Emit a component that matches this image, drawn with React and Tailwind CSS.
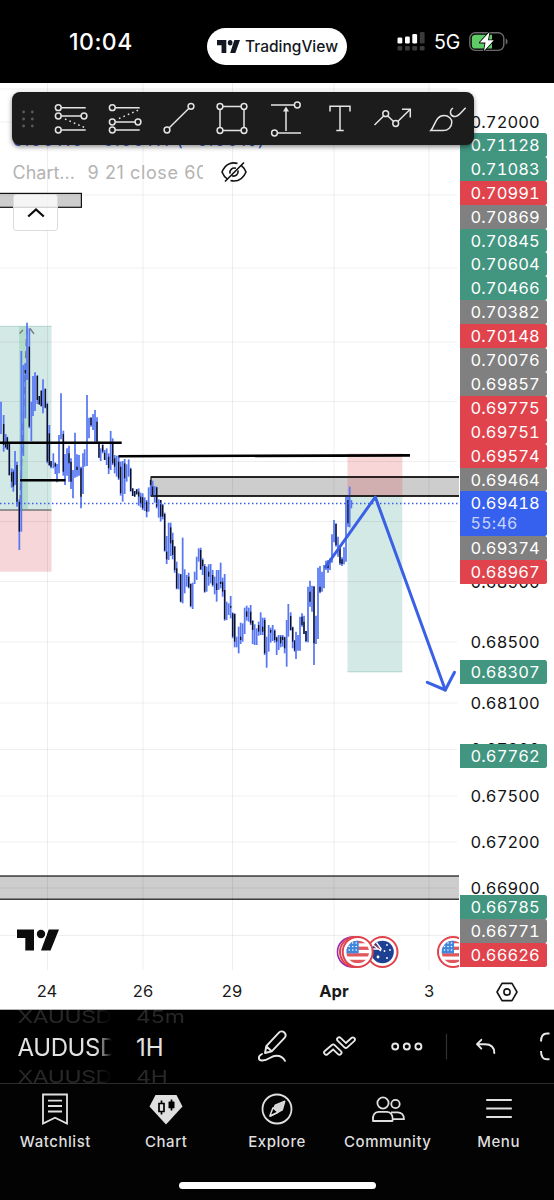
import React from "react";

// Each bar: x, high, low, and for falling bars the body top and bottom (units: 1/3 px, origin at y 310).
const BARS_A = [
  [3, 275, 372], [11, 315, 425, 342, 405], [17, 372, 415, 398, 412], [22, 380, 420, 382, 418],
  [28, 398, 497, 400, 495], [35, 475, 533, 487, 515], [40, 478, 545, 485, 530], [45, 423, 525],
  [51, 455, 590, 465, 575], [58, 568, 720, 575, 665], [64, 123, 665], [70, 165, 438],
  [76, 160, 325, 180, 190], [81, 38, 210], [88, 55, 355, 110, 350], [94, 275, 393],
  [99, 198, 318], [105, 187, 303], [112, 195, 282, 198, 270], [118, 258, 285, 258, 283],
  [124, 240, 290, 243, 288], [129, 208, 310], [136, 235, 295, 237, 293], [142, 278, 460, 282, 455],
  [148, 345, 468, 370, 465], [153, 453, 475, 453, 470], [160, 430, 475], [166, 457, 492, 460, 470],
  [171, 462, 517], [177, 375, 490], [183, 250, 388], [190, 362, 497, 372, 485], [195, 432, 525],
  [201, 415, 497], [207, 407, 515, 430, 460], [213, 445, 537, 455, 515], [219, 480, 565],
  [225, 368, 503], [231, 433, 500, 470, 480], [237, 435, 497], [243, 470, 595, 475, 560],
  [249, 430, 552], [254, 418, 470], [261, 255, 468], [267, 323, 385], [273, 322, 350, 323, 346],
  [279, 312, 360], [285, 300, 395], [291, 322, 395, 335, 395], [297, 395, 443, 396, 443],
  [302, 415, 453], [308, 403, 430, 405, 425], [314, 420, 450, 428, 450], [320, 415, 465],
  [326, 430, 492, 440, 475], [332, 363, 480], [338, 385, 465, 400, 460], [344, 435, 490, 445, 470],
  [350, 437, 500], [356, 437, 510, 455, 505], [362, 455, 557, 470, 550], [368, 453, 575],
  [374, 447, 552, 460, 505], [380, 463, 515], [386, 448, 500], [392, 473, 545, 477, 543],
  [398, 535, 558, 535, 558], [404, 543, 560, 543, 560], [410, 537, 553, 538, 553],
  [416, 535, 587, 545, 560], [422, 548, 592, 560, 580], [428, 550, 600, 562, 595], [434, 562, 603],
  [440, 570, 622, 575, 605], [446, 532, 605],
];
// Same units, origin at (130, 440).
const BARS_B = [
  [62, 120, 168, 120, 135], [68, 122, 168, 140, 165], [74, 138, 188], [80, 140, 205, 142, 200],
  [86, 178, 233], [92, 180, 245, 180, 230], [98, 192, 238, 195, 230], [104, 218, 335, 222, 332],
  [110, 288, 372, 335, 358], [116, 248, 360], [122, 248, 348, 262, 310], [128, 278, 358, 300, 345],
  [134, 318, 398, 320, 390], [140, 365, 448, 385, 445], [146, 400, 448], [152, 402, 487, 403, 485],
  [158, 293, 490], [164, 388, 460], [170, 405, 440], [176, 398, 445, 410, 442],
  [182, 430, 502, 432, 498], [188, 428, 507], [194, 395, 432], [200, 350, 420], [206, 325, 365],
  [212, 323, 390, 330, 388], [218, 355, 405, 360, 378], [224, 372, 458, 378, 455], [230, 380, 455],
  [236, 373, 437, 395, 410], [242, 372, 430], [248, 390, 440, 405, 435], [254, 410, 463],
  [260, 390, 485, 430, 450], [266, 390, 450], [272, 368, 445, 425, 432], [278, 413, 470, 425, 455],
  [284, 402, 542, 450, 538], [290, 485, 540], [296, 490, 525], [302, 468, 535, 498, 503],
  [308, 517, 595, 520, 590], [314, 520, 622, 522, 605], [320, 590, 622], [326, 560, 640],
  [332, 548, 612, 590, 600], [338, 550, 605], [344, 503, 582], [350, 497, 542, 514, 530],
  [356, 503, 545], [362, 495, 555, 515, 550], [368, 540, 612, 543, 570], [374, 553, 615],
  [380, 565, 615], [386, 545, 587, 555, 575], [392, 517, 585], [398, 533, 585, 560, 575],
  [404, 533, 645, 540, 640], [410, 590, 683], [416, 555, 635], [422, 563, 608, 570, 578],
  [428, 555, 603], [434, 568, 608, 572, 600], [440, 590, 645, 592, 605], [446, 585, 630],
  [452, 585, 622, 590, 610], [458, 585, 620, 590, 600], [464, 590, 640, 592, 625], [470, 540, 680],
  [475, 492, 590], [482, 517, 572, 528, 570], [488, 560, 625, 562, 605], [494, 600, 635, 602, 632],
  [498, 575, 657], [504, 585, 632], [510, 530, 632], [516, 520, 560, 530, 555],
  [522, 527, 582, 545, 582], [528, 573, 607, 573, 603], [534, 440, 607], [540, 422, 500, 455, 485],
  [546, 437, 515], [552, 438, 675, 440, 610], [558, 527, 612], [564, 383, 597],
  [570, 378, 460, 440, 455], [576, 395, 455], [582, 375, 445], [588, 362, 390], [594, 360, 398, 365, 385],
  [600, 355, 390], [606, 283, 368], [612, 240, 307], [618, 250, 320, 252, 315], [624, 290, 350],
  [630, 320, 375, 325, 370], [636, 352, 378, 358, 372], [642, 322, 373], [648, 170, 365],
  [654, 165, 260, 180, 250], [659, 140, 262], [664, 180, 205],
];

const toBar = (dx, dy) => ([x, h, l, t, b]) => ({
  x: dx + x / 3, h: dy + h / 3, l: dy + l / 3,
  t: t === undefined ? null : dy + t / 3, b: b === undefined ? null : dy + b / 3,
});
const BARS = [...BARS_A.map(toBar(0, 310)), ...BARS_B.map(toBar(130, 440))];

const V_GRID = [47.5, 143, 232.5, 334, 429];
const H_GRID = [89, 122, 195, 268, 342, 401.5, 461.5, 521.5, 581.5, 642, 703, 749.5, 796, 842, 888, 935.5];

function UsFlag({ cx, ring = "#e0434b" }) {
  return (
    <g>
      <circle cx={cx} cy="952" r="15" fill="#fff" stroke={ring} strokeWidth="2" />
      <g clipPath={`url(#flag${cx})`}>
        <rect x={cx - 12} y="940" width="24" height="24" fill="#fff" />
        {[940, 946.6, 953.2, 959.8].map((y) => (
          <rect key={y} x={cx - 12} y={y} width="24" height="3.3" fill="#e0575d" />
        ))}
        <rect x={cx - 12} y="940" width="13" height="13.3" fill="#3f86dd" />
        {[943, 946.5, 950].map((y) =>
          [-8.5, -5, -1.5].map((d) => <circle key={`${y}${d}`} cx={cx + d} cy={y} r="0.8" fill="#fff" />)
        )}
      </g>
      <clipPath id={`flag${cx}`}>
        <circle cx={cx} cy="952" r="11.3" />
      </clipPath>
    </g>
  );
}

function AuFlag() {
  return (
    <g>
      <circle cx="382.5" cy="952" r="15" fill="#fff" stroke="#e0434b" strokeWidth="2" />
      <circle cx="382.5" cy="952" r="11.3" fill="#1d4093" />
      <path d="M373 945 l8 6 M376.5 942.5 l5 7 M373 949 h8" stroke="#fff" strokeWidth="1.3" />
      <path d="M374 944 l6 5" stroke="#e0434b" strokeWidth="1" />
      <g fill="#fff">
        <circle cx="387" cy="945" r="0.9" />
        <circle cx="390" cy="950" r="0.9" />
        <circle cx="384.5" cy="951" r="0.9" />
        <circle cx="387" cy="958" r="1" />
        <circle cx="378" cy="957" r="1.4" />
      </g>
    </g>
  );
}

function Chart() {
  return (
    <svg className="block h-[887px] w-[459px]" viewBox="0 83 459 887">
      <g fill="#d3e9e5">
        <rect x="0" y="326" width="51.5" height="184" />
        <rect x="347.5" y="496" width="54.8" height="176" />
      </g>
      <rect x="0" y="510" width="51.5" height="61.7" fill="#f6d6d8" />
      <rect x="19" y="326" width="9" height="184" fill="#b3dccf" />
      <g fill="#cdcdcd" stroke="#111" strokeWidth="1.2">
        <rect x="-2" y="193.4" width="83.4" height="13.9" />
        <rect x="151" y="477" width="312" height="19" />
        <rect x="-2" y="876" width="465" height="23.2" />
      </g>
      <rect x="347.5" y="453.5" width="54.8" height="42.5" fill="#e0434b" fillOpacity="0.22" />
      <g stroke="#000" strokeOpacity="0.065" strokeWidth="1">
        {V_GRID.map((x) => <line key={x} x1={x} x2={x} y1="83" y2="970" />)}
        {H_GRID.map((y) => <line key={y} x1="0" x2="457" y1={y} y2={y} />)}
      </g>
      <path d="M0 326.3 H51.5 M347.5 671.8 H402.3" stroke="#a9cdc5" strokeWidth="0.8" />
      <path d="M0 510 H51.5" stroke="#777" strokeWidth="1.3" />
      <path d="M20 502 L27 324" stroke="#777" strokeWidth="1.4" strokeDasharray="7 5" fill="none" />
      <path d="M19.5 333.5 L23 330 M30 328.5 L34 333.8" stroke="#777" strokeWidth="1.4" fill="none" />
      <g>
        {BARS.map((c, i) => (
          <g key={i}>
            <line x1={c.x} x2={c.x} y1={c.h} y2={c.l} stroke="#5878f2" strokeWidth="1.75" />
            {c.t !== null && <line x1={c.x} x2={c.x} y1={c.t} y2={c.b} stroke="#10131f" strokeWidth="1.4" />}
          </g>
        ))}
      </g>
      <path d="M0 442.7 H121.7 M20 480.2 H65.5 M118.5 456.2 L410 455.4" stroke="#000" strokeWidth="2.6" />
      <path d="M151 477 H459 M151 496 H459" stroke="#111" strokeWidth="1.4" />
      <path d="M0 503.4 H459" stroke="#3b5fe8" strokeWidth="1.5" strokeDasharray="1.5 2.5" />
      <g fill="none" stroke="#3a60e6" strokeWidth="3" strokeLinecap="round" strokeLinejoin="round">
        <path d="M325.5 567 L375.3 497 L445.3 690" />
        <path d="M427.3 682.3 L445.3 690 L454.5 672.3" />
      </g>
      <circle cx="352.5" cy="952" r="15" fill="#fff" stroke="#9b27b0" strokeWidth="1.6" />
      <circle cx="355" cy="952" r="15" fill="#fff" stroke="#e0434b" strokeWidth="2" />
      <AuFlag />
      <UsFlag cx={357.7} />
      <UsFlag cx={453} />
      <g fill="#0c0c0c" stroke="#fff" strokeWidth="3" paintOrder="stroke">
        <path d="M17 929.5 H34 V950.5 H25.3 V938 H17 Z" />
        <path d="M48.7 929.5 H59 L50.5 950.5 H41 Z" />
        <circle cx="41" cy="934" r="4.2" />
      </g>
    </svg>
  );
}

const GREEN = "bg-[#42957f]";
const RED = "bg-[#e0434b]";
const GRAY = "bg-[#808080]";

function Tag({ color, children, sub }) {
  return (
    <div className={`relative z-10 flex w-[87.5px] shrink-0 flex-col rounded-r-[2.5px] pl-[11px] text-white ${color} ${sub ? "h-[44.6px]" : "h-[23.92px]"}`}>
      <span className="leading-[24px]">{children}</span>
      {sub && <span className="text-[16px] leading-[17px] tracking-[0.3px] text-[#c8d3fb]">{sub}</span>}
    </div>
  );
}

function Price({ className, children }) {
  return <div className={`h-6 shrink-0 pl-[11px] leading-6 text-[#131313] ${className}`}>{children}</div>;
}

const TOP_TAGS = [
  ["0.71128", GREEN], ["0.71083", GREEN], ["0.70991", RED], ["0.70869", GRAY], ["0.70845", GREEN],
  ["0.70604", GREEN], ["0.70466", GREEN], ["0.70382", GRAY], ["0.70148", RED], ["0.70076", GRAY],
  ["0.69857", GRAY], ["0.69775", RED], ["0.69751", RED], ["0.69574", RED], ["0.69464", GRAY],
];

function PriceScale() {
  return (
    <div className="flex h-[887px] w-[95px] flex-col overflow-hidden pt-[26.9px] pl-[0.5px] text-[16.5px] tracking-[0.1px] tabular-nums">
      <Price className="-mb-[1px]">0.72000</Price>
      {TOP_TAGS.map(([v, c]) => <Tag key={v} color={c}>{v}</Tag>)}
      <Tag color="bg-[#3660ee]" sub="55:46">0.69418</Tag>
      <Tag color={GRAY}>0.69374</Tag>
      <Tag color={RED}>0.68967</Tag>
      <Price className="-mt-[13.8px]">0.68900</Price>
      <Price className="mt-[36.3px]">0.68500</Price>
      <div className="mt-[5.5px] flex flex-col"><Tag color={GREEN}>0.68307</Tag></div>
      <Price className="mt-[7.3px]">0.68100</Price>
      <Price className="mt-[22px]">0.67800</Price>
      <div className="-mt-[17.5px] flex flex-col"><Tag color={GREEN}>0.67762</Tag></div>
      <Price className="mt-[16.5px]">0.67500</Price>
      <Price className="mt-[22px]">0.67200</Price>
      <Price className="mt-[22px]">0.66900</Price>
      <div className="-mt-[5px] flex flex-col">
        <Tag color={GREEN}>0.66785</Tag>
        <Tag color={GRAY}>0.66771</Tag>
        <Tag color={RED}>0.66626</Tag>
      </div>
    </div>
  );
}

const Dot = ({ x, y }) => <circle cx={x} cy={y} r="2.9" fill="#1c1c1c" />;

function ToolIcon({ children }) {
  return (
    <span className="flex w-[53.7px] shrink-0 justify-center">
      <svg className="h-[40px] w-[40px]" viewBox="-20 -20 40 40" fill="none" stroke="#e4e4e4" strokeWidth="1.5">
        {children}
      </svg>
    </span>
  );
}

function DrawingBar() {
  return (
    <div className="absolute top-[9px] left-[11.5px] z-20 flex h-[53px] w-[462px] items-center overflow-hidden rounded-[8px] bg-[#1c1c1c] shadow-[0_2px_5px_rgba(0,0,0,0.45)]">
      <span className="flex w-[32.8px] shrink-0 justify-center">
        <svg className="h-6 w-6" viewBox="0 0 24 24" fill="#5a5a5a">
          {[5, 12, 19].map((y) => [7.6, 16.3].map((x) => <circle key={`${x}${y}`} cx={x} cy={y} r="1.4" />))}
        </svg>
      </span>
      <ToolIcon>
        <path d="M-12.7 -11.3 H14.7 M-12.7 -3 H13 M-12.7 11 H14.7" />
        <path d="M-6 0 L13.5 8.5" strokeDasharray="1.6 3.2" />
        <Dot x={-12.7} y={-11.3} /><Dot x={-12.7} y={-3} /><Dot x={13} y={-3} /><Dot x={-12.7} y={11} />
      </ToolIcon>
      <ToolIcon>
        <path d="M-12.7 -11.3 H14.7 M-12.7 3 H13 M-12.7 11 H14.7" />
        <path d="M-6 -0.5 L13.5 -9" strokeDasharray="1.6 3.2" />
        <Dot x={-12.7} y={-11.3} /><Dot x={-12.7} y={3} /><Dot x={13} y={3} /><Dot x={-12.7} y={11} />
      </ToolIcon>
      <ToolIcon>
        <path d="M-12 11 L12 -12.7" />
        <Dot x={-12} y={11} /><Dot x={12} y={-12.7} />
      </ToolIcon>
      <ToolIcon>
        <rect x="-12" y="-12.5" width="24" height="24" />
        <Dot x={-12} y={-12.5} /><Dot x={12} y={-12.5} /><Dot x={-12} y={11.5} /><Dot x={12} y={11.5} />
      </ToolIcon>
      <ToolIcon>
        <path d="M-15 -14 H11 M-11 14 H15 M0 -9 V12" />
        <path d="M0 -12.5 L3 -7.5 H-3 Z" fill="#e4e4e4" stroke="none" />
        <Dot x={11.3} y={-14} /><Dot x={-11.5} y={14} />
      </ToolIcon>
      <ToolIcon>
        <path d="M-10 -7.5 V-12.7 H10 V-7.5 M0 -12.7 V11.5 M-3.7 11.5 H3.7" />
      </ToolIcon>
      <ToolIcon>
        <path d="M-18.5 6 L-7.3 -5 L2.7 4.5 L17 -9.5 M9 -9.8 H17.3 V-1.5" />
        <Dot x={-7.3} y={-5.3} /><Dot x={2.7} y={4.5} />
      </ToolIcon>
      <ToolIcon>
        <path d="M-16.2 11.6 C-12 7 -11.5 -3.4 -3 -3.4 C2 -3.4 4.8 0 4.8 3.3 C4.8 8 1 11.6 -4 11.6 Z" />
        <path d="M6 -11 C1.8 -8 3 -2.3 8.5 -2.5 C12 -3 14 -6.5 18.7 -11.3" />
      </ToolIcon>
    </div>
  );
}

function Legend() {
  return (
    <div className="absolute top-[45px] left-[12.5px] flex flex-col">
      <span className="h-[24px] text-[18px] leading-[24px] tracking-[1px] whitespace-nowrap text-[#3b56d8]">0.00110 +0.00111 (+0.00%)</span>
      <div className="mt-[7px] flex h-[26px] items-center text-[18px] text-[#b3b3b3]">
        <span className="w-[75px]">Chart...</span>
        <span className="w-[115px] overflow-hidden tracking-[0.6px] whitespace-nowrap">9 21 close 60</span>
        <svg className="ml-[17px] h-[26px] w-[28px]" viewBox="-14 -13 28 26" fill="none" stroke="#111" strokeWidth="1.6">
          <path d="M3.5 -8.4 C1 -9.3 -2 -9.3 -4.5 -8.3 C-8 -7 -10.5 -3.5 -12 0 C-10.8 3 -9 5.5 -6.5 7.2 M7 -6.8 C9.2 -5 10.8 -2.6 12 0 C9.6 5.8 5 9 0 9 C-1.2 9 -2.4 8.8 -3.5 8.5" />
          <path d="M2 -3.7 C-1.5 -5 -4.8 -2 -4 1.6 M4 -1.6 C4.8 2 1.5 5 -2 3.8 M-9 9.5 L10 -9.5" />
        </svg>
      </div>
    </div>
  );
}

function SettingsIcon() {
  return (
    <svg className="h-6 w-6" viewBox="-12 -12 24 24" fill="none" stroke="#151515" strokeWidth="1.6">
      <path d="M-5 -8.6 H5 L10 0 L5 8.6 H-5 L-10 0 Z" strokeLinejoin="round" />
      <circle r="3.1" />
    </svg>
  );
}

function StatusBar() {
  return (
    <header className="flex h-[83px] bg-black text-white">
      <div className="flex w-[207px] items-start pt-[28px] pl-[69px] text-[23px] leading-[28px] font-medium tracking-[0.5px]">10:04</div>
      <div className="mt-[28px] flex h-[37px] w-[140px] items-center rounded-full bg-white pl-[10px] text-[#131722]">
        <svg className="h-[13px] w-[23px]" viewBox="0 0 42 21" preserveAspectRatio="none" fill="#131722">
          <path d="M0 0 H17 V21 H8.3 V8.5 H0 Z M31.7 0 H42 L33.5 21 H24 Z" />
          <circle cx="24" cy="4.4" r="4.3" />
        </svg>
        <span className="ml-[5px] text-[15.5px] font-medium">TradingView</span>
      </div>
      <div className="flex items-start pt-[31px] pl-[50px]">
        <svg className="mt-[1px] h-[20px] w-[28px]" viewBox="0 0 28 20">
          <g fill="#fff">
            <rect x="0.5" y="5.5" width="4.8" height="6" rx="1.3" />
            <rect x="8" y="4.5" width="4.8" height="7" rx="1.3" />
            <rect x="15.3" y="2" width="4.8" height="9.5" rx="1.3" />
          </g>
          <g fill="#3a3a3a">
            <rect x="22.8" y="0" width="4.8" height="11.5" rx="1.3" />
            {[0.5, 8, 15.3, 22.8].map((x) => <rect key={x} x={x} y="14" width="4.8" height="4.6" rx="1.3" />)}
          </g>
        </svg>
        <span className="ml-[9px] w-[26px] text-[19.5px] leading-[23px]">5G</span>
        <svg className="ml-[9px] h-[22px] w-[40px]" viewBox="0 0 40 22">
          <rect x="0.8" y="1.8" width="34" height="17.6" rx="5.5" fill="none" stroke="#6a6a6a" strokeWidth="1.4" />
          <path d="M6.5 3.7 H23 V17.6 H6.5 A3.7 3.7 0 0 1 2.8 13.9 V7.4 A3.7 3.7 0 0 1 6.5 3.7 Z" fill="#5fcb65" />
          <path d="M36.7 7.6 C39.2 8.7 39.2 12.4 36.7 13.5 Z" fill="#6a6a6a" />
          <path d="M20.5 1 L10.8 11.6 H16.5 L15 20 L24.8 9.3 H19 Z" fill="#fff" stroke="#000" strokeWidth="1.6" paintOrder="stroke" strokeLinejoin="round" />
        </svg>
      </div>
    </header>
  );
}

function Wheel({ above, value, below, className }) {
  return (
    <div className={`flex h-[73px] flex-col items-start overflow-hidden whitespace-nowrap ${className}`}>
      <span className="h-[18px] shrink-0 origin-left scale-y-[0.78] text-[23px] leading-[13px] text-[#282828]">{above}</span>
      <span className="h-[39px] shrink-0 text-[24px] leading-[39px] text-[#e2e2e2]">{value}</span>
      <span className="h-[20px] shrink-0 origin-left scale-y-[0.78] text-[23px] leading-[20px] text-[#282828]">{below}</span>
    </div>
  );
}

function ToolRow() {
  return (
    <div className="flex h-[73px] overflow-hidden bg-black">
      <Wheel
        className="ml-[17.5px] w-[94.5px] tracking-[-0.4px] [mask-image:linear-gradient(to_right,black_83%,transparent)]"
        above="XAUUSD" value="AUDUSD" below="XAUUSD"
      />
      <Wheel className="ml-[24px] w-[80px]" above="45m" value="1H" below="4H" />
      <svg className="h-[73px] w-[338px] shrink-0" viewBox="216 1010 338 73" fill="none" stroke="#e8e8e8" strokeWidth="1.9" strokeLinejoin="round" strokeLinecap="round">
        <path d="M265 1053 L266.3 1046.2 L278.7 1032.8 C280.3 1031 282.7 1031 284.3 1032.5 C286 1034.2 286 1036.4 284.3 1038.2 L271.7 1051.3 Z M266.3 1046.2 L271.7 1051.3" />
        <path d="M262 1054 C257.5 1056 258 1060.8 262.5 1060.5 C269 1060.3 270.5 1055.7 276.5 1055.7 C281 1055.7 283.5 1057.8 285 1060.8" />
        <path d="M326.2 1052.6 L333.2 1046.6 L339.4 1052.6 M339.2 1039.4 L345.9 1045.8 L352.8 1039.6" strokeWidth="6" />
        <path d="M326.2 1052.6 L333.2 1046.6 L339.4 1052.6 M339.2 1039.4 L345.9 1045.8 L352.8 1039.6" stroke="#000" strokeWidth="2.4" />
        <circle cx="395.2" cy="1046.5" r="3" />
        <circle cx="406.8" cy="1046.5" r="3" />
        <circle cx="418.4" cy="1046.5" r="3" />
        <path d="M446.5 1034 V1059" stroke="#303030" strokeWidth="1.2" />
        <path d="M481.3 1039.8 L477 1044.2 L481.3 1048.6 M477.3 1044.2 H485 C491 1044.2 494.3 1047 494.3 1053" />
        <path d="M549.5 1033.5 H547 C543 1033.5 541 1035.5 541 1041.5 M541 1051 C541 1057 543 1059.3 547 1059.3 H549.5" strokeLinecap="butt" />
      </svg>
    </div>
  );
}

const TABS = [
  ["Watchlist", (
    <path key="w" d="M-12 -14.5 H12 V14.5 L0 8.7 L-12 14.5 Z M-7 -8.3 H7 M-7 -3 H7 M-7 2.5 H7" />
  )],
  ["Chart", (
    <g key="c">
      <path d="M-10.5 -14 H10.5 L16.5 -2.5 L0 15.5 L-16.5 -2.5 Z" fill="#e0e0e0" stroke="none" />
      <path d="M-7 -5.5 H-2 V2.5 H-7 Z M-4.5 -8.5 V-5.5 M-4.5 2.5 V5.5 M5.5 -9.5 V1.5" stroke="#000" strokeWidth="1.7" />
      <rect x="2.5" y="-7.5" width="6" height="6.8" rx="0.6" fill="#000" stroke="none" />
    </g>
  )],
  ["Explore", (
    <g key="e">
      <circle r="14.5" />
      <path d="M7.8 -7.8 L5.3 1 L-6.3 7.2 L-1.8 -4 Z" fill="#d5d5d5" strokeWidth="1.3" strokeLinejoin="round" />
      <path d="M-7.2 7 L-4 -1.2 L1 3.2 Z" fill="#000" strokeWidth="1.5" strokeLinejoin="round" />
    </g>
  )],
  ["Community", (
    <g key="m">
      <circle cx="-5" cy="-6" r="5.6" />
      <circle cx="7.5" cy="-5" r="4.2" />
      <path d="M-15 12 C-16 6 -13 2.8 -9.5 2.8 H-1 C3 2.8 5 6.5 4.7 10.5 L4.5 12 Z M3 3.3 H9.5 C13.5 3.3 16 6 16 10.2 H4.7" strokeLinejoin="round" />
    </g>
  )],
  ["Menu", <path key="n" d="M-12.8 -9 H12.8 M-12.8 -0.5 H12.8 M-12.8 8 H12.8" />],
];

function TabBar() {
  return (
    <nav className="flex h-[117px] flex-col items-center border-t border-[#2c2c2c] bg-[#030303]">
      <div className="grid h-[98px] w-full grid-cols-5">
        {TABS.map(([label, icon]) => (
          <div key={label} className="flex flex-col items-center pt-[7px]">
            <svg className="h-9 w-9" viewBox="-18 -18 36 36" fill="none" stroke="#e0e0e0" strokeWidth="1.8">{icon}</svg>
            <span className="mt-[4.6px] text-[15px] leading-[20px] font-medium tracking-[0.55px] text-[#dedede]">{label}</span>
          </div>
        ))}
      </div>
      <div className="h-[7px] w-[197px] rounded-full bg-white" />
    </nav>
  );
}

export default function App() {
  return (
    <div className="flex h-[1200px] w-[554px] flex-col overflow-hidden bg-black font-['Inter','Liberation_Sans',sans-serif]">
      <StatusBar />
      <main className="relative h-[927px] border-b border-[#b5b5b5] bg-white">
        <div className="flex">
          <Chart />
          <PriceScale />
        </div>
        <div className="grid h-[39px] grid-cols-[94px_98px_80px_124px_66px_90px] items-center justify-items-center pt-[4px] text-[16.5px] text-[#1a1a1a]">
          <span>24</span>
          <span>26</span>
          <span>29</span>
          <span className="font-bold">Apr</span>
          <span>3</span>
          <SettingsIcon />
        </div>
        <Legend />
        <DrawingBar />
        <button className="absolute top-[111px] left-[13px] flex h-[37px] w-[45px] items-center justify-center rounded-[3px] border border-[#dcdcdc] bg-white/80">
          <svg className="h-[12px] w-[18px]" viewBox="0 0 18 12" fill="none" stroke="#0c0c0c" strokeWidth="2.2">
            <path d="M1.2 9.5 L9 2.5 L16.8 9.5" />
          </svg>
        </button>
      </main>
      <ToolRow />
      <TabBar />
    </div>
  );
}
